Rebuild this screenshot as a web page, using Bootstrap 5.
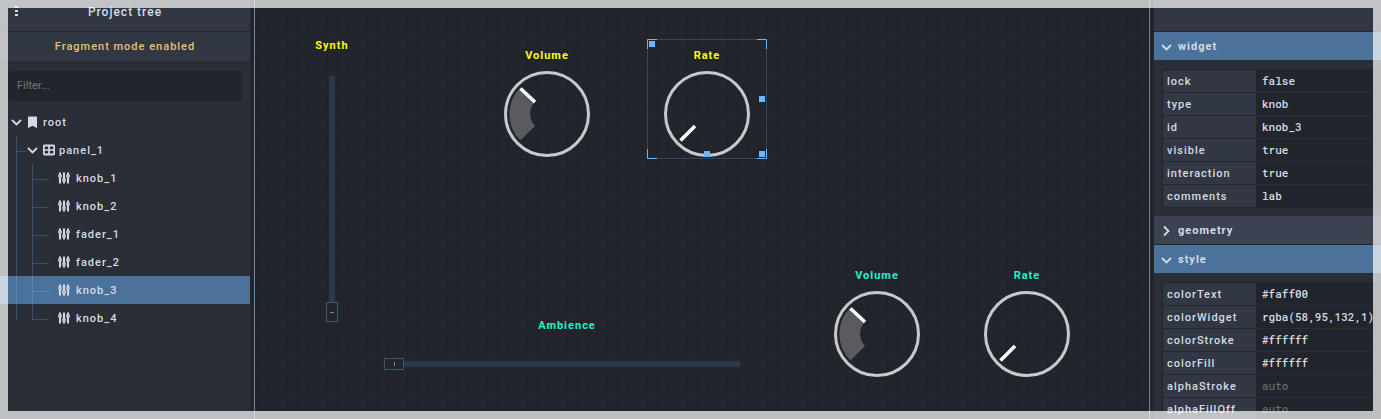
<!DOCTYPE html>
<html lang="en">
<head>
<meta charset="utf-8">
<meta name="viewport" content="width=device-width, initial-scale=1">
<title>Project editor</title>
<link href="https://cdn.jsdelivr.net/npm/bootstrap@5.3.0/dist/css/bootstrap.min.css" rel="stylesheet">
<style>
  :root { --bg: #22252c; --panel: #2a2e36; --head: #323843; --accent: #4b729b; --ink: #d5dbe6; --guide: #3a506a; }
  body { background: var(--bg); color: var(--ink); font: 500 11px/16px Roboto, sans-serif; letter-spacing: 1px; }
  svg { display: block; flex: none; }
  .side { background: var(--panel); flex: none; }
  .side-left { width: 250px; }
  .side-right { width: 227px; }
  .gutter { width: 5px; flex: none; }
  .gutter-left { border-right: 1px solid #70849d; }
  .gutter-right { border-left: 1px solid #70849d; }
  .pane-head { height: 32px; background: var(--head); border-bottom: 1px solid var(--bg); }
  .pane-head h1 { font-size: 12px; line-height: 16px; font-weight: 500; }
  .menu-btn { width: 16px; color: var(--ink); }
  .notice { height: 31px; background: var(--head); color: #e5c07b; border-bottom: 1px solid var(--bg); }
  .filter { height: 30px; margin: 8px 8px 7px; }
  .filter input { background: var(--bg); color: var(--ink); font-size: 11px; letter-spacing: 0; border-radius: 4px; padding: 0 9px 2px; outline: 0; }
  .filter input::placeholder { color: #74767c; font-weight: 400; opacity: 1; }
  .tree-row { height: 28px; padding-left: 11px; }
  .tree-row.picked { background: var(--accent); --guide: #5585b9; }
  .tree-row.nested { padding-left: 16px; }
  .tree-row .name { padding-top: 1px; }
  .rail { width: 16px; height: 28px; flex: none; border-left: 1px solid var(--guide); }
  .branch { width: 17px; background: linear-gradient(var(--guide), var(--guide)) 0 15px / 100% 1px no-repeat; }
  .branch.short { background-size: 9px 1px; width: 11px; }
  .tree-row.last .rail { height: 16px; align-self: flex-start; }
  .leaf-icon { margin: 0 6px 0 9px; }
  .canvas { background: repeating-linear-gradient(90deg, transparent 0 2px, #1f2228 2px 3px, transparent 3px 10px), repeating-linear-gradient(transparent 0 9px, #1f2228 9px 10px), #22252c; }
  .widget-box { position: absolute; width: 120px; height: 120px; }
  .widget-box .caption { padding-top: 8px; }
  .caption { font-weight: 700; text-align: center; line-height: 17px; }
  .widget-box .dial { margin: 7px auto 0; }
  .lemon { color: #faff00; }
  .aqua { color: #19f5cd; }
  .selected { box-shadow: inset 0 0 0 1px #30475c; }
  .marks { position: absolute; inset: 0; }
  .fader-v { position: absolute; width: 60px; left: 47px; top: 37px; }
  .fader-h { position: absolute; width: 370px; left: 127px; top: 317px; }
  .sect { height: 28px; background: var(--accent); color: var(--ink); padding: 1px 7px 0; gap: 5px; font-size: 11px; line-height: 16px; font-weight: 700; letter-spacing: 1px; }
  .sect.closed { background: #3c4251; box-shadow: 0 1px var(--bg); margin-bottom: 1px; }
  .props { padding: 9px 0 8px 8px; }
  .props table { border-collapse: separate; border-spacing: 0; border: 1px solid var(--bg); border-right: 0; border-bottom: 0; border-radius: 4px 0 0 4px; overflow: hidden; table-layout: fixed; }
  .props th { width: 93px; height: 23px; padding: 0 4px; background: var(--head); font-weight: 500; border-bottom: 1px solid var(--bg); vertical-align: top; }
  .props td { height: 23px; padding: 0; background: var(--bg); border-bottom: 1px solid var(--panel); vertical-align: top; }
  .props tr:last-child > * { border-bottom-color: var(--bg); }
  .props th label { display: block; padding-top: 2px; line-height: 20px; }
  .props input { display: block; width: 100%; height: 22px; border: 0; outline: 0; background: transparent; color: var(--ink); padding: 0 6px 1px; font: 500 11px/16px "Roboto Mono", "DejaVu Sans Mono", monospace; letter-spacing: 0; }
  .props input::placeholder { color: #64666b; opacity: 1; }
  .veil { position: fixed; inset: 0; border: 8px solid rgba(255,255,255,.7); pointer-events: none; z-index: 10; }
</style>
</head>
<body class="vh-100 overflow-hidden">
<svg width="0" height="0" class="position-absolute" aria-hidden="true">
  <symbol id="down" viewBox="0 0 12 12"><path d="M1 4 5.500 8.500 10 4" fill="none" stroke="currentColor" stroke-width="1.800"/></symbol>
  <symbol id="right" viewBox="0 0 12 12"><path d="M3 1.500 7.500 6 3 10.500" fill="none" stroke="currentColor" stroke-width="1.800"/></symbol>
  <symbol id="sliders" viewBox="0 0 12 12"><g stroke="currentColor" stroke-width="2"><path d="M2 .5v11M6 .5v11M10 .5v11"/></g><g fill="currentColor"><circle cx="2" cy="4" r="2"/><circle cx="6" cy="8" r="2"/><circle cx="10" cy="4" r="2"/></g><g fill="#2a2e36"><circle cx="2" cy="4" r=".6"/><circle cx="6" cy="8" r=".6"/><circle cx="10" cy="4" r=".6"/></g></symbol>
  <symbol id="dial" viewBox="0 0 86 86"><circle cx="43" cy="43" r="41.500" fill="none" stroke="#c8c9cb" stroke-width="3"/></symbol>
  <symbol id="dial-low" viewBox="0 0 86 86"><use href="#dial"/><path d="M16.500 69.500 31 55" stroke="#fff" stroke-width="3.500"/></symbol>
  <symbol id="dial-mid" viewBox="0 0 86 86"><use href="#dial"/><path d="M16.400 69.600A37.600 37.600 0 0 1 16.400 16.400L31 31A17 17 0 0 0 31 55Z" fill="#fff" fill-opacity=".25"/><path d="M16.500 17.500 31 31" stroke="#fff" stroke-width="3.500"/></symbol>
</svg>

<div class="d-flex h-100">
  <aside class="side side-left">
    <header class="pane-head d-flex align-items-center px-2 pb-2">
      <button class="menu-btn btn p-0 border-0 rounded-0" aria-label="Menu"><svg width="16" height="12" viewBox="0 0 16 12" fill="currentColor"><path d="M7 0h3v2H7zM7 4h3v2H7zM7 8h3v2H7z"/></svg></button>
      <h1 class="flex-fill text-center m-0 pe-3">Project tree</h1>
    </header>
    <div class="notice d-flex align-items-center justify-content-center">Fragment mode enabled</div>
    <div class="filter"><input class="w-100 h-100 border-0 d-block" type="text" placeholder="Filter..." aria-label="Filter"></div>
    <ul class="list-unstyled m-0">
      <li class="tree-row d-flex align-items-center"><svg width="12" height="12"><use href="#down"/></svg><svg class="ms-1 me-1" width="12" height="12" viewBox="0 0 12 12"><path d="M1 1.500q0-1 1-1h7q1 0 1 1V12L5.500 9.800 1 12z" fill="currentColor"/></svg><span class="name">root</span></li>
      <li class="tree-row nested d-flex align-items-center"><span class="rail branch short"></span><svg width="12" height="12"><use href="#down"/></svg><svg class="ms-1" width="12" height="12" viewBox="0 0 12 12"><rect x=".8" y="1.500" width="10.400" height="9" rx="1" fill="none" stroke="currentColor" stroke-width="1.800"/><path d="M6 2v8M1 6h10" stroke="currentColor" stroke-width="1.700"/></svg><span class="name ms-1">panel_1</span></li>
      <li class="tree-row nested d-flex align-items-center"><span class="rail"></span><span class="rail branch"></span><svg class="leaf-icon" width="12" height="12"><use href="#sliders"/></svg><span class="name">knob_1</span></li>
      <li class="tree-row nested d-flex align-items-center"><span class="rail"></span><span class="rail branch"></span><svg class="leaf-icon" width="12" height="12"><use href="#sliders"/></svg><span class="name">knob_2</span></li>
      <li class="tree-row nested d-flex align-items-center"><span class="rail"></span><span class="rail branch"></span><svg class="leaf-icon" width="12" height="12"><use href="#sliders"/></svg><span class="name">fader_1</span></li>
      <li class="tree-row nested d-flex align-items-center"><span class="rail"></span><span class="rail branch"></span><svg class="leaf-icon" width="12" height="12"><use href="#sliders"/></svg><span class="name">fader_2</span></li>
      <li class="tree-row nested picked d-flex align-items-center"><span class="rail"></span><span class="rail branch"></span><svg class="leaf-icon" width="12" height="12"><use href="#sliders"/></svg><span class="name">knob_3</span></li>
      <li class="tree-row nested last d-flex align-items-center"><span class="rail"></span><span class="rail branch"></span><svg class="leaf-icon" width="12" height="12"><use href="#sliders"/></svg><span class="name">knob_4</span></li>
    </ul>
  </aside>
  <div class="gutter gutter-left"></div>

  <main class="canvas position-relative flex-fill overflow-hidden">
    <div class="fader-v">
      <div class="caption lemon">Synth</div>
      <svg class="mx-auto" width="14" height="270" viewBox="0 0 14 270"><path d="M4.500 22h5v226h-5z" fill="#2d3b49"/><path d="M3.500 22h7v226h-7z" fill="#2d3b49" fill-opacity=".4"/><rect x="1.500" y="248.500" width="11" height="19" fill="#22252c" stroke="#3a5672"/><path d="M5 258h4v1H5z" fill="#5c8bb8"/></svg>
    </div>
    <div class="widget-box" style="left:232px;top:39px"><div class="caption lemon">Volume</div><svg class="dial" width="86" height="86"><use href="#dial-mid"/></svg></div>
    <div class="widget-box selected" style="left:392px;top:39px"><div class="caption lemon">Rate</div><svg class="dial" width="86" height="86"><use href="#dial-low"/></svg>
      <svg class="marks" width="120" height="120" viewBox="0 0 120 120"><path d="M.5 10V.5H10M110 .5h9.500V10M119.500 110v9.500H110M10 119.500H.5V110" fill="none" stroke="#6db5fd"/><path d="M2 2h6v6H2zM112 57h6v6h-6zM112 112h6v6h-6zM57 112h6v6h-6z" fill="#6db5fd"/></svg>
    </div>
    <div class="fader-h">
      <div class="caption aqua">Ambience</div>
      <svg width="360" height="60" viewBox="0 0 360 60"><path d="M22 27.500h336v5H22z" fill="#2d3b49"/><path d="M22 26.500h336v7H22z" fill="#2d3b49" fill-opacity=".4"/><rect x="2.500" y="24.500" width="19" height="11" fill="#22252c" stroke="#3a5672"/><path d="M12 28h1v4h-1z" fill="#5c8bb8"/></svg>
    </div>
    <div class="widget-box" style="left:562px;top:259px"><div class="caption aqua">Volume</div><svg class="dial" width="86" height="86"><use href="#dial-mid"/></svg></div>
    <div class="widget-box" style="left:712px;top:259px"><div class="caption aqua">Rate</div><svg class="dial" width="86" height="86"><use href="#dial-low"/></svg></div>
  </main>

  <div class="gutter gutter-right"></div>
  <aside class="side side-right overflow-hidden">
    <header class="pane-head"></header>
    <button class="sect btn w-100 border-0 rounded-0 d-flex align-items-center"><svg width="12" height="12"><use href="#down"/></svg>widget</button>
    <div class="props">
      <table class="w-100">
        <tr><th><label for="p1">lock</label></th><td><input id="p1" value="false"></td></tr>
        <tr><th><label for="p2">type</label></th><td><input id="p2" value="knob"></td></tr>
        <tr><th><label for="p3">id</label></th><td><input id="p3" value="knob_3"></td></tr>
        <tr><th><label for="p4">visible</label></th><td><input id="p4" value="true"></td></tr>
        <tr><th><label for="p5">interaction</label></th><td><input id="p5" value="true"></td></tr>
        <tr><th><label for="p6">comments</label></th><td><input id="p6" value="lab"></td></tr>
      </table>
    </div>
    <button class="sect closed btn w-100 border-0 rounded-0 d-flex align-items-center"><svg width="12" height="12"><use href="#right"/></svg>geometry</button>
    <button class="sect btn w-100 border-0 rounded-0 d-flex align-items-center"><svg width="12" height="12"><use href="#down"/></svg>style</button>
    <div class="props">
      <table class="w-100">
        <tr><th><label for="s1">colorText</label></th><td><input id="s1" value="#faff00"></td></tr>
        <tr><th><label for="s2">colorWidget</label></th><td><input id="s2" value="rgba(58,95,132,1)"></td></tr>
        <tr><th><label for="s3">colorStroke</label></th><td><input id="s3" value="#ffffff"></td></tr>
        <tr><th><label for="s4">colorFill</label></th><td><input id="s4" value="#ffffff"></td></tr>
        <tr><th><label for="s5">alphaStroke</label></th><td><input id="s5" placeholder="auto"></td></tr>
        <tr><th><label for="s6">alphaFillOff</label></th><td><input id="s6" placeholder="auto"></td></tr>
      </table>
    </div>
  </aside>
</div>
<div class="veil"></div>
<script src="https://cdn.jsdelivr.net/npm/bootstrap@5.3.0/dist/js/bootstrap.bundle.min.js"></script>
</body>
</html>
